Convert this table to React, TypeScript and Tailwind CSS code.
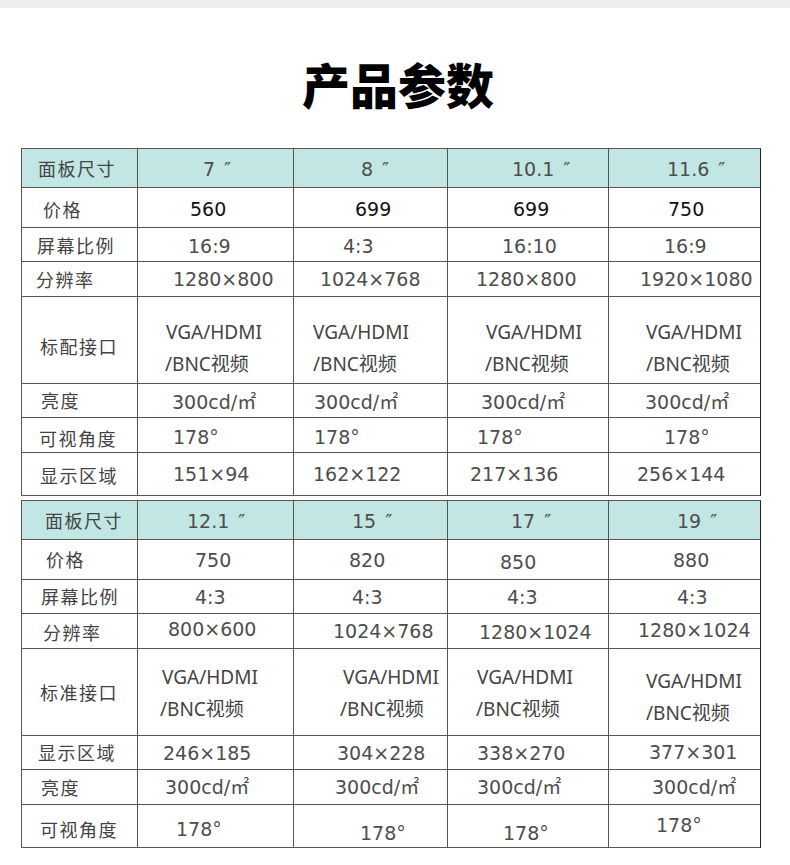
import React from "react";

type Cell = { t: React.ReactNode; c: string };
type Row = { h: string; head?: boolean; label: Cell; vals: Cell[]; two?: boolean };

const LBL = "font-['Noto_Sans_CJK_SC',sans-serif] text-[18px] tracking-[1.5px] text-[#444]";
const NUM = "font-['DejaVu_Sans','Noto_Sans_CJK_SC',sans-serif] text-[19px] leading-[24px] text-[#4d4d4d]";
const LAT = "font-['Noto_Sans','Noto_Sans_CJK_SC',sans-serif] text-[19px] leading-[32px] text-[#444]";

const Q = (n: string) => (
  <>
    {n}
    <span className="ml-[9px] text-[19px]">″</span>
  </>
);

const Two = ({ a, b }: { a: string; b: string }) => (
  <div className={`flex flex-col ${LAT}`}>
    <div className={a}>VGA/HDMI</div>
    <div className={b}>/BNC视频</div>
  </div>
);

const CD = "300cd/㎡";

const table1: Row[] = [
  {
    h: "h-[39px]",
    head: true,
    label: { t: "面板尺寸", c: "pl-[16px]" },
    vals: [
      { t: Q("7"), c: "pl-[65px] pt-[2px]" },
      { t: Q("8"), c: "pl-[67px] pt-[2px]" },
      { t: Q("10.1"), c: "pl-[64px] pt-[2px]" },
      { t: Q("11.6"), c: "pl-[58px] pt-[2px]" },
    ],
  },
  {
    h: "h-[40px]",
    label: { t: "价格", c: "pl-[21px] pt-[4px]" },
    vals: [
      { t: "560", c: "pl-[52px] pt-[3px] !text-[#111]" },
      { t: "699", c: "pl-[61px] pt-[3px] !text-[#111]" },
      { t: "699", c: "pl-[65px] pt-[3px] !text-[#111]" },
      { t: "750", c: "pl-[59px] pt-[3px] !text-[#111]" },
    ],
  },
  {
    h: "h-[34px]",
    label: { t: "屏幕比例", c: "pl-[15px] pt-[2px]" },
    vals: [
      { t: "16:9", c: "pl-[50px] pt-[2px]" },
      { t: "4:3", c: "pl-[49px] pt-[2px]" },
      { t: "16:10", c: "pl-[54px] pt-[2px]" },
      { t: "16:9", c: "pl-[55px] pt-[2px]" },
    ],
  },
  {
    h: "h-[35px]",
    label: { t: "分辨率", c: "pl-[14px]" },
    vals: [
      { t: "1280×800", c: "pl-[35px]" },
      { t: "1024×768", c: "pl-[26px]" },
      { t: "1280×800", c: "pl-[28px]" },
      { t: "1920×1080", c: "pl-[31px]" },
    ],
  },
  {
    h: "h-[87px]",
    two: true,
    label: { t: "标配接口", c: "pl-[18px] pt-[12px]" },
    vals: [
      { t: <Two a="pl-[1px]" b="" />, c: "pl-[27px] pt-[15px]" },
      { t: <Two a="" b="" />, c: "pl-[19px] pt-[15px]" },
      { t: <Two a="pl-[1px]" b="" />, c: "pl-[37px] pt-[15px]" },
      { t: <Two a="" b="" />, c: "pl-[37px] pt-[15px]" },
    ],
  },
  {
    h: "h-[34px]",
    label: { t: "亮度", c: "pl-[19px]" },
    vals: [
      { t: CD, c: "pl-[34px] pt-[2px]" },
      { t: CD, c: "pl-[20px] pt-[2px]" },
      { t: CD, c: "pl-[33px] pt-[2px]" },
      { t: CD, c: "pl-[36px] pt-[2px]" },
    ],
  },
  {
    h: "h-[35px]",
    label: { t: "可视角度", c: "pl-[17px] pt-[6px]" },
    vals: [
      { t: "178°", c: "pl-[35px] pt-[3px]" },
      { t: "178°", c: "pl-[20px] pt-[3px]" },
      { t: "178°", c: "pl-[29px] pt-[3px]" },
      { t: "178°", c: "pl-[55px] pt-[3px]" },
    ],
  },
  {
    h: "h-[43px]",
    label: { t: "显示区域", c: "pl-[18px] pt-[2px]" },
    vals: [
      { t: "151×94", c: "pl-[35px]" },
      { t: "162×122", c: "pl-[19px]" },
      { t: "217×136", c: "pl-[22px]" },
      { t: "256×144", c: "pl-[28px]" },
    ],
  },
];

const table2: Row[] = [
  {
    h: "h-[39px]",
    head: true,
    label: { t: "面板尺寸", c: "pl-[23px]" },
    vals: [
      { t: Q("12.1"), c: "pl-[49px] pt-[2px]" },
      { t: Q("15"), c: "pl-[58px] pt-[2px]" },
      { t: Q("17"), c: "pl-[63px] pt-[2px]" },
      { t: Q("19"), c: "pl-[68px] pt-[2px]" },
    ],
  },
  {
    h: "h-[40px]",
    label: { t: "价格", c: "pl-[24px]" },
    vals: [
      { t: "750", c: "pl-[57px]" },
      { t: "820", c: "pl-[55px]" },
      { t: "850", c: "pl-[52px] pt-[5px]" },
      { t: "880", c: "pl-[64px]" },
    ],
  },
  {
    h: "h-[34px]",
    label: { t: "屏幕比例", c: "pl-[19px]" },
    vals: [
      { t: "4:3", c: "pl-[57px]" },
      { t: "4:3", c: "pl-[58px]" },
      { t: "4:3", c: "pl-[59px]" },
      { t: "4:3", c: "pl-[68px]" },
    ],
  },
  {
    h: "h-[35px]",
    label: { t: "分辨率", c: "pl-[21px] pt-[3px]" },
    vals: [
      { t: "800×600", c: "pl-[30px] pb-[5px]" },
      { t: "1024×768", c: "pl-[39px]" },
      { t: "1280×1024", c: "pl-[31px] pt-[2px]" },
      { t: "1280×1024", c: "pl-[29px] pb-[3px]" },
    ],
  },
  {
    h: "h-[87px]",
    two: true,
    label: { t: "标准接口", c: "pl-[18px]" },
    vals: [
      { t: <Two a="pl-[2px]" b="" />, c: "pl-[22px] pt-[2px]" },
      { t: <Two a="pl-[3px]" b="" />, c: "pl-[46px] pt-[2px]" },
      { t: <Two a="pl-[1px]" b="" />, c: "pl-[28px] pt-[2px]" },
      { t: <Two a="" b="" />, c: "pl-[37px] pt-[10px]" },
    ],
  },
  {
    h: "h-[34px]",
    label: { t: "显示区域", c: "pl-[16px]" },
    vals: [
      { t: "246×185", c: "pl-[25px]" },
      { t: "304×228", c: "pl-[43px]" },
      { t: "338×270", c: "pl-[29px]" },
      { t: "377×301", c: "pl-[40px] pb-[2px]" },
    ],
  },
  {
    h: "h-[35px]",
    label: { t: "亮度", c: "pl-[19px]" },
    vals: [
      { t: CD, c: "pl-[27px]" },
      { t: CD, c: "pl-[41px]" },
      { t: CD, c: "pl-[29px]" },
      { t: CD, c: "pl-[43px]" },
    ],
  },
  {
    h: "h-[43px]",
    label: { t: "可视角度", c: "pl-[18px] pt-[7px]" },
    vals: [
      { t: "178°", c: "pl-[38px] pt-[6px]" },
      { t: "178°", c: "pl-[66px] pt-[14px]" },
      { t: "178°", c: "pl-[55px] pt-[14px]" },
      { t: "178°", c: "pl-[47px] pb-[2px]" },
    ],
  },
];

function Table({ rows, className }: { rows: Row[]; className?: string }) {
  return (
    <div
      className={`ml-[21px] w-[740px] grid grid-cols-[116px_156px_154px_161px_152px] border-l border-t border-[#555] ${className ?? ""}`}
    >
      {rows.map((r, ri) => (
        <React.Fragment key={ri}>
          <div
            className={`${r.h} flex items-center border-r border-b border-[#555] ${r.head ? "bg-[#c1e6e4]" : "bg-white"} ${LBL} ${r.label.c}`}
          >
            {r.label.t}
          </div>
          {r.vals.map((v, vi) => (
            <div
              key={vi}
              className={`${r.h} flex items-center border-b ${vi === 3 ? "border-r border-r-[#222]" : "border-r"} border-[#555] ${r.head ? "bg-[#c1e6e4]" : "bg-white"} ${r.two ? "" : NUM} ${v.c}`}
            >
              {v.t}
            </div>
          ))}
        </React.Fragment>
      ))}
    </div>
  );
}

export default function App() {
  return (
    <div className="w-[790px] h-[865px] bg-white overflow-hidden">
      <div className="h-[8px] bg-[#eeeeee]" />
      <div className="pt-[50px] pl-[6px] h-[100px] mb-[40px] text-center font-['Noto_Sans_CJK_SC',sans-serif] font-black text-[48px] leading-[50px] text-black">
        产品参数
      </div>
      <Table rows={table1} />
      <Table rows={table2} className="mt-[4px]" />
    </div>
  );
}
